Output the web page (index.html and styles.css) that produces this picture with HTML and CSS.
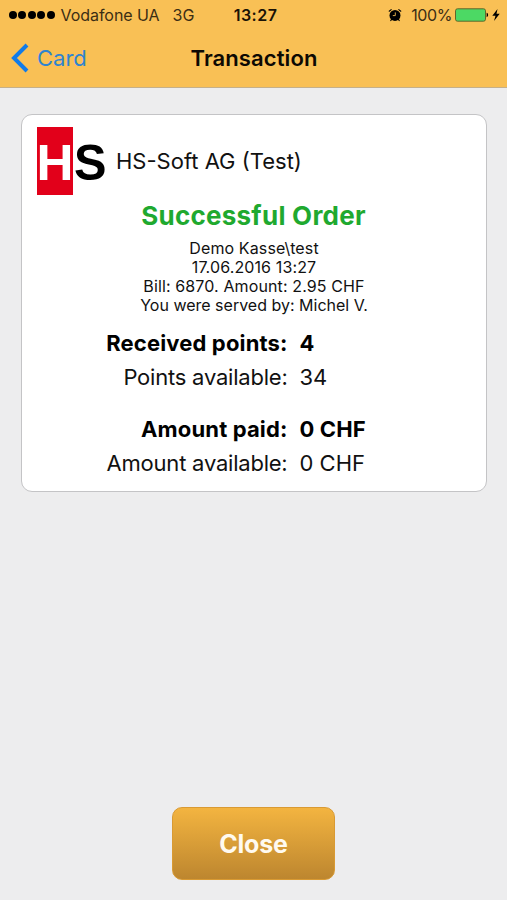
FILE: index.html
```html
<!DOCTYPE html>
<html lang="en">
<head>
    <meta charset="UTF-8">
    <meta name="viewport" content="width=device-width, initial-scale=1.0">
    <title>Transaction</title>
    <link rel="stylesheet" href="styles.css">
</head>
<body>
    <div class="screen">
        <header class="header">
            <div class="status-bar">
                <div class="status-left">
                    <div class="signal">
                        <span></span><span></span><span></span><span></span><span></span>
                    </div>
                    <span class="carrier">Vodafone UA</span>
                    <span class="network">3G</span>
                </div>
                <div class="clock">13:27</div>
                <div class="status-right">
                    <svg class="alarm" width="14" height="14" viewBox="0 0 14 14">
                        <path d="M1.2 3.2L3.2 1.6M12.8 3.2L10.8 1.6" stroke="#000" stroke-width="1.1" stroke-linecap="round"/>
                        <circle cx="7" cy="7.4" r="5.5"/>
                        <path d="M3.6 11.4L2.8 12.5M10.4 11.4L11.2 12.5" stroke="#000" stroke-width="1.2" stroke-linecap="round"/>
                        <path d="M7.3 4.4V7.6H4.8" fill="none" stroke="#d9a84b" stroke-width="1"/>
                    </svg>
                    <span class="percent">100%</span>
                    <svg class="battery" width="34" height="14" viewBox="0 0 34 14">
                        <rect x=".5" y=".8" width="30" height="12.4" rx="2" fill="#4cd964" stroke="#62662a"/>
                        <path d="M31.6 4.8C33.6 5.2 33.6 8.8 31.6 9.2Z"/>
                    </svg>
                    <svg class="bolt" width="8" height="12" viewBox="0 0 8 12">
                        <path d="M5.5 0L.3 6.8H3.5L2 12L7.7 4.8H4.5Z"/>
                    </svg>
                </div>
            </div>
            <nav class="nav-bar">
                <a class="back" href="#">
                    <svg width="18" height="30" viewBox="0 0 18 30">
                        <path d="M16 2L3 15L16 28" fill="none" stroke="#117be8" stroke-width="4"/>
                    </svg>
                    <span>Card</span>
                </a>
                <h1 class="title">Transaction</h1>
            </nav>
        </header>

        <main class="content">
            <section class="card">
                <div class="merchant">
                    <svg class="logo" width="70" height="68" viewBox="0 0 70 68">
                        <rect width="36" height="68" fill="#e2001a"/>
                        <text class="logo-text" x="-.4" y="53" fill="#fff" textLength="37" lengthAdjust="spacingAndGlyphs">H</text>
                        <text class="logo-text" x="37" y="53" fill="#000" textLength="32.5" lengthAdjust="spacingAndGlyphs">S</text>
                    </svg>
                    <span class="merchant-name">HS-Soft AG (Test)</span>
                </div>

                <h2 class="result">Successful Order</h2>

                <div class="details">
                    <p class="register">Demo Kasse\test</p>
                    <p class="date">17.06.2016 13:27</p>
                    <p class="bill">Bill: 6870. Amount: 2.95 CHF</p>
                    <p class="served">You were served by: Michel V.</p>
                </div>

                <div class="totals">
                    <span class="label strong">Received points:</span><span class="value strong">4</span>
                    <span class="label">Points available:</span><span class="value">34</span>
                </div>
                <div class="totals">
                    <span class="label strong">Amount paid:</span><span class="value strong">0 CHF</span>
                    <span class="label">Amount available:</span><span class="value">0 CHF</span>
                </div>
            </section>
        </main>

        <footer class="footer">
            <button class="close-btn">Close</button>
        </footer>
    </div>
</body>
</html>
```
FILE: styles.css
```css
* {
    margin: 0;
    padding: 0;
    box-sizing: border-box;
}

body {
    font-family: Inter, "Liberation Sans", sans-serif;
    background: #ededee;
    color: #111;
}

.screen {
    display: flex;
    flex-direction: column;
    height: 100vh;
    overflow: hidden;
}

.header {
    height: 88px;
    background: #f9c055;
    border-bottom: 1px solid #c5b08a;
}

.status-bar {
    display: grid;
    grid-template-columns: 1fr auto 1fr;
    align-items: center;
    height: 30px;
    padding: 0 7px 0 9px;
    font-size: 16px;
    color: #3b2e14;
}

.status-left,
.status-right {
    display: flex;
    align-items: center;
}

.status-right {
    justify-content: flex-end;
}

.signal {
    display: flex;
    gap: 1.4px;
    margin-right: 6px;
}

.signal span {
    width: 8px;
    height: 8px;
    border-radius: 50%;
    background: #000;
}

.carrier {
    letter-spacing: -0.05px;
}

.network {
    margin-left: 13px;
}

.clock {
    padding-left: 2px;
    font-weight: 600;
    letter-spacing: 0.5px;
    color: #1a1205;
}

.percent {
    margin: 0 3px 0 9px;
    letter-spacing: -0.4px;
}

.bolt {
    margin-left: 3px;
}

.nav-bar {
    display: grid;
    grid-template-columns: 1fr auto 1fr;
    align-items: center;
    height: 56px;
    padding: 0 10px 0 11px;
}

.back {
    display: flex;
    align-items: center;
    gap: 8px;
    font-size: 22px;
    color: #2f84d0;
    text-decoration: none;
}

.title {
    font-size: 22px;
    font-weight: 600;
    letter-spacing: 0.1px;
    color: #0d0903;
}

.content {
    flex: 1;
    padding: 26px 20px 0 21px;
}

.card {
    height: 378px;
    padding: 12px 15px;
    background: #fff;
    border: 1px solid #c4c4c6;
    border-radius: 11px;
}

.merchant {
    display: flex;
    align-items: center;
    gap: 9px;
    height: 68px;
}

.logo-text {
    font-family: "Liberation Sans", Arial, sans-serif;
    font-size: 50px;
    font-weight: 700;
}

.merchant-name {
    font-size: 22px;
}

.result {
    margin-top: 5px;
    padding-right: 1px;
    font-size: 26px;
    font-weight: 700;
    letter-spacing: 0.25px;
    line-height: 32px;
    text-align: center;
    color: #1fa92f;
}

.details {
    margin-top: 7px;
    font-size: 16px;
    line-height: 19px;
    text-align: center;
}

.register,
.date,
.bill {
    letter-spacing: 0.12px;
}

.totals {
    display: grid;
    grid-template-columns: 250.5px 1fr;
    column-gap: 12px;
    margin-top: 10.5px;
    font-size: 22px;
    line-height: 34px;
}

.totals + .totals {
    margin-top: 18.5px;
}

.label {
    text-align: right;
    letter-spacing: -0.22px;
}

.strong {
    font-weight: 700;
    letter-spacing: 0.15px;
    color: #000;
}

.footer {
    display: flex;
    justify-content: center;
    padding-bottom: 20px;
}

.close-btn {
    width: 163px;
    height: 73px;
    border: 1px solid #d99a33;
    border-radius: 10px;
    background: linear-gradient(#f3b440, #bd862f);
    font-family: inherit;
    font-size: 25px;
    font-weight: 700;
    letter-spacing: -0.2px;
    color: #fffaf0;
}
```
